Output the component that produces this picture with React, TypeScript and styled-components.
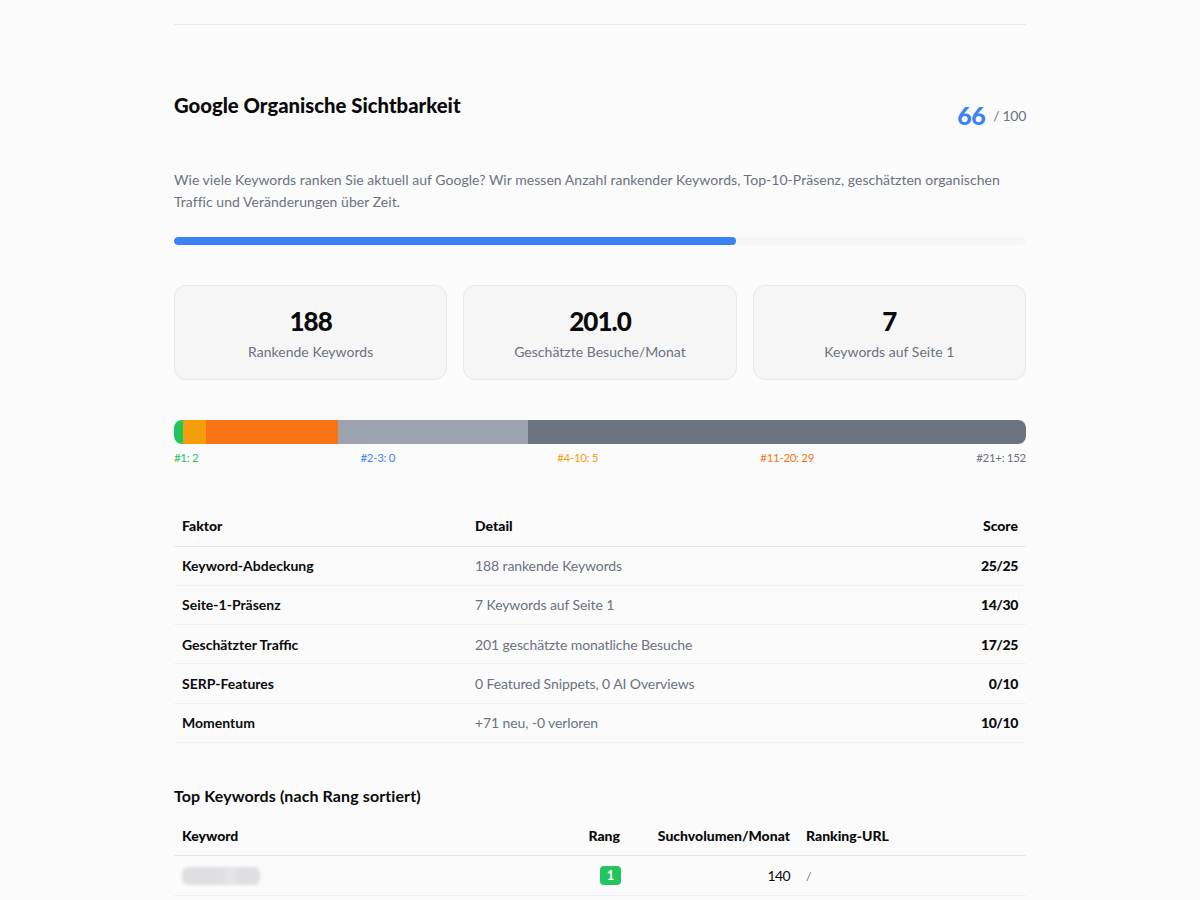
import React from "react";
import styled, { createGlobalStyle } from "styled-components";

const GlobalStyle = createGlobalStyle`
  html, body { margin: 0; padding: 0; background: #fbfbfc; height: 900px; overflow: hidden; }
  body { font-family: "Lato", "Open Sans", sans-serif; color: #0a0a0a; }
`;

const Page = styled.main`
  width: 852px;
  margin: 0 auto;
  padding-top: 24px;
`;

const Divider = styled.hr`
  margin: 0;
  border: 0;
  border-top: 1px solid #e8e8ea;
`;

const Header = styled.header`
  display: flex;
  justify-content: space-between;
  align-items: flex-start;
  padding-top: 67px;
`;

const Title = styled.h2`
  margin: 0;
  font-size: 20.3px;
  line-height: 26px;
  font-weight: 900;
  color: #0a0a0a;
`;

const ScoreBox = styled.div`
  display: flex;
  align-items: center;
  gap: 8px;
  padding-top: 8px;
`;

const ScoreValue = styled.span`
  font-size: 25px;
  line-height: 30px;
  font-weight: 900;
  color: #3b82f6;
  letter-spacing: -0.5px;
`;

const ScoreMax = styled.span`
  font-size: 14px;
  color: #6b7280;
  letter-spacing: -0.3px;
`;

const Lead = styled.p`
  margin: 39px 0 0;
  font-size: 14px;
  line-height: 22px;
  color: #6b7280;
  letter-spacing: 0.04px;
  white-space: nowrap;
`;

const Progress = styled.div`
  margin-top: 24px;
  height: 8px;
  border-radius: 4px;
  background: #f7f7f8;
  overflow: hidden;
`;

const ProgressFill = styled.div`
  height: 100%;
  border-radius: 4px;
  background: #3b82f6;
`;

const Stats = styled.section`
  display: grid;
  grid-template-columns: repeat(3, 1fr);
  gap: 16px;
  margin-top: 40px;
`;

const StatCard = styled.div`
  box-sizing: border-box;
  height: 95px;
  padding-top: 20px;
  border: 1px solid #e9e9eb;
  border-radius: 12px;
  background: #f6f6f7;
  text-align: center;
`;

const StatValue = styled.div`
  font-size: 26px;
  line-height: 31px;
  font-weight: 900;
  color: #0a0a0a;
  letter-spacing: -1px;
`;

const StatLabel = styled.div`
  margin-top: 5px;
  font-size: 14px;
  line-height: 20px;
  color: #6b7280;
  letter-spacing: 0.02px;
`;

const Distribution = styled.div`
  display: flex;
  height: 24px;
  margin-top: 40px;
  border-radius: 8px;
  overflow: hidden;
`;

const Segment = styled.div<{ $color: string }>`
  background: ${(p) => p.$color};
`;

const Legend = styled.div`
  display: flex;
  justify-content: space-between;
  margin-top: 6px;
`;

const LegendItem = styled.span<{ $color: string }>`
  font-size: 11.5px;
  line-height: 15px;
  color: ${(p) => p.$color};
  letter-spacing: -0.3px;
`;

const Table = styled.table`
  width: 100%;
  border-collapse: collapse;
  table-layout: fixed;
`;

const FactorTable = styled(Table)`
  margin-top: 41px;
`;

const HeadCell = styled.th<{ $right?: boolean }>`
  height: 40px;
  box-sizing: border-box;
  padding: 0 8px;
  border-bottom: 1px solid #e6e6e8;
  font-size: 14px;
  font-weight: 900;
  text-align: ${(p) => (p.$right ? "right" : "left")};
  color: #0a0a0a;
`;

const Cell = styled.td<{ $right?: boolean; $strong?: boolean; $muted?: boolean; $medium?: boolean }>`
  height: 39.3px;
  box-sizing: border-box;
  padding: 0 8px;
  border-bottom: 1px solid #f1f1f3;
  font-size: 14px;
  font-weight: ${(p) => (p.$strong ? 900 : p.$medium ? 700 : 400)};
  text-align: ${(p) => (p.$right ? "right" : "left")};
  color: ${(p) => (p.$muted ? "#6b7280" : "#0a0a0a")};
  letter-spacing: ${(p) => (p.$muted ? "-0.1px" : p.$strong ? "-0.4px" : "0")};
`;

const SubTitle = styled.h3`
  margin: 43px 0 0;
  font-size: 16px;
  line-height: 20px;
  font-weight: 700;
  color: #0a0a0a;
  letter-spacing: 0.1px;
`;

const KeywordTable = styled(Table)`
  margin-top: 10px;
`;

const Blurred = styled.span`
  display: block;
  width: 78px;
  height: 18px;
  border-radius: 6px;
  background: linear-gradient(90deg, #dfdfe1 0 50%, #e6e6e8 62%, #dfdfe1 74%);
  filter: blur(1.5px);
`;

const RankBadge = styled.span`
  display: inline-block;
  min-width: 21px;
  box-sizing: border-box;
  margin-right: -1px;
  padding: 0 4px;
  border-radius: 4px;
  background: #22c55e;
  color: #fff;
  font-size: 13px;
  line-height: 19px;
  font-weight: 700;
  text-align: center;
`;

const Volume = styled.span`
  letter-spacing: -0.6px;
`;

const UrlText = styled.span`
  font-size: 12px;
  color: #6b7280;
`;

const factors = [
  ["Keyword-Abdeckung", "188 rankende Keywords", "25/25"],
  ["Seite-1-Präsenz", "7 Keywords auf Seite 1", "14/30"],
  ["Geschätzter Traffic", "201 geschätzte monatliche Besuche", "17/25"],
  ["SERP-Features", "0 Featured Snippets, 0 AI Overviews", "0/10"],
  ["Momentum", "+71 neu, -0 verloren", "10/10"],
];

const stats = [
  ["188", "Rankende Keywords"],
  ["201.0", "Geschätzte Besuche/Monat"],
  ["7", "Keywords auf Seite 1"],
];

const segments = [
  { width: 9, color: "#22c55e" },
  { width: 23, color: "#f59e0b" },
  { width: 132, color: "#f97316" },
  { width: 190, color: "#9ca3af" },
  { width: 498, color: "#6b7280" },
];

const legend = [
  ["#1: 2", "#22c55e"],
  ["#2-3: 0", "#3b82f6"],
  ["#4-10: 5", "#f59e0b"],
  ["#11-20: 29", "#f97316"],
  ["#21+: 152", "#6b7280"],
];

export default function App() {
  return (
    <Page>
      <GlobalStyle />
      <Divider />
      <Header>
        <Title>Google Organische Sichtbarkeit</Title>
        <ScoreBox>
          <ScoreValue>66</ScoreValue>
          <ScoreMax>/ 100</ScoreMax>
        </ScoreBox>
      </Header>
      <Lead>
        Wie viele Keywords ranken Sie aktuell auf Google? Wir messen Anzahl rankender Keywords, Top-10-Präsenz, geschätzten organischen
        <br />
        Traffic und Veränderungen über Zeit.
      </Lead>
      <Progress>
        <ProgressFill style={{ width: "66%" }} />
      </Progress>
      <Stats>
        {stats.map(([value, label]) => (
          <StatCard key={label}>
            <StatValue>{value}</StatValue>
            <StatLabel>{label}</StatLabel>
          </StatCard>
        ))}
      </Stats>
      <Distribution>
        {segments.map((s) => (
          <Segment key={s.color} $color={s.color} style={{ width: s.width }} />
        ))}
      </Distribution>
      <Legend>
        {legend.map(([text, color]) => (
          <LegendItem key={text} $color={color}>
            {text}
          </LegendItem>
        ))}
      </Legend>
      <FactorTable>
        <colgroup>
          <col style={{ width: 293 }} />
          <col />
          <col style={{ width: 100 }} />
        </colgroup>
        <thead>
          <tr>
            <HeadCell>Faktor</HeadCell>
            <HeadCell>Detail</HeadCell>
            <HeadCell $right>Score</HeadCell>
          </tr>
        </thead>
        <tbody>
          {factors.map(([name, detail, score]) => (
            <tr key={name}>
              <Cell $medium>{name}</Cell>
              <Cell $muted>{detail}</Cell>
              <Cell $right $strong>
                {score}
              </Cell>
            </tr>
          ))}
        </tbody>
      </FactorTable>
      <SubTitle>Top Keywords (nach Rang sortiert)</SubTitle>
      <KeywordTable>
        <colgroup>
          <col />
          <col style={{ width: 70 }} />
          <col style={{ width: 170 }} />
          <col style={{ width: 228 }} />
        </colgroup>
        <thead>
          <tr>
            <HeadCell>Keyword</HeadCell>
            <HeadCell $right>Rang</HeadCell>
            <HeadCell $right>Suchvolumen/Monat</HeadCell>
            <HeadCell>Ranking-URL</HeadCell>
          </tr>
        </thead>
        <tbody>
          <tr>
            <Cell>
              <Blurred />
            </Cell>
            <Cell $right>
              <RankBadge>1</RankBadge>
            </Cell>
            <Cell $right>
              <Volume>140</Volume>
            </Cell>
            <Cell>
              <UrlText>/</UrlText>
            </Cell>
          </tr>
        </tbody>
      </KeywordTable>
    </Page>
  );
}
